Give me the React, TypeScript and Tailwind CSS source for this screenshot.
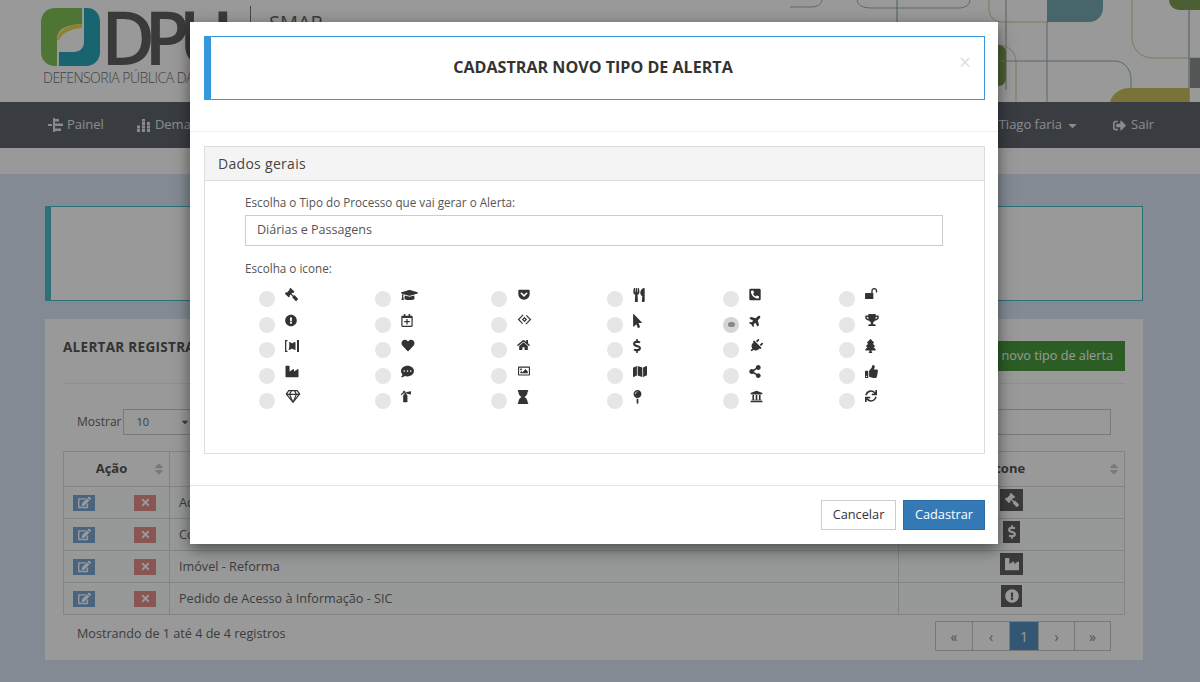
import type { ComponentType, ReactNode } from 'react'
import {
  FaGavel, FaGraduationCap, FaGetPocket, FaUtensils, FaPhoneSquareAlt,
  FaExclamationCircle, FaRegCalendarPlus, FaMousePointer, FaPlane, FaTrophy,
  FaHeart, FaHome, FaDollarSign, FaPlug, FaTree, FaIndustry, FaCommentDots, FaRegImage,
  FaMap, FaShareAlt, FaThumbsUp, FaRegGem, FaFireExtinguisher, FaHourglass, FaMapPin,
  FaUniversity, FaSync, FaEdit, FaTimes, FaSignOutAlt, FaCaretDown, FaSort,
} from 'react-icons/fa'

type IconType = ComponentType<{ className?: string }>

// ── Icons the packages do not have ───────────────────────────────────────

function DiamondCode({ className }: { className?: string }) {
  return (
    <svg viewBox="0 0 16 12" className={className} fill="none" stroke="currentColor" strokeWidth="1.3">
      <path d="M6.500 1 1.500 6l4.500 4.500M9.500 11l5-5L10 1.500" />
      <path d="M8.500 3.500 6 6l1.500 1.500M7.500 8.500 10 6 8.500 4.500" />
    </svg>
  )
}

function BracketHeart({ className }: { className?: string }) {
  return (
    <svg viewBox="0 0 14 14" className={className} fill="currentColor">
      <path d="M0 1h2.500v1.300H1.300v9.400h1.200V13H0zM14 1h-2v12h2z" />
      <path d="M4 3c1.500 0 2.500 1 3 1.500C7.500 4 9 3 10.500 3v8C9 11 8 10 7 9.500 6 10 5 11 3.500 11 4.500 9 4.500 5 4 3z" />
    </svg>
  )
}

function OpenLock({ className }: { className?: string }) {
  return (
    <svg viewBox="0 0 14 12" className={className}>
      <path d="M0 5.500h9V12H0z" fill="currentColor" />
      <path d="M7.500 5.500V3.200a2.500 2.500 0 0 1 5 0V5" fill="none" stroke="currentColor" strokeWidth="1.500" />
    </svg>
  )
}

function BlocksIcon({ className }: { className?: string }) {
  return (
    <svg viewBox="0 0 13 13" className={className} fill="currentColor">
      <path d="M0 10h3v3H0zM0 6.500h3v3H0zM5 10h3v3H5zM5 6.500h3v3H5zM5 3h3v3H5zM5 0h3v2.500H5zM10 10h3v3h-3zM10 6.500h3v3h-3zM10 3h3v3h-3z" />
    </svg>
  )
}

function PanelIcon({ className }: { className?: string }) {
  return (
    <svg viewBox="0 0 15 14" className={className} fill="currentColor">
      <path d="M0 6h4v2H0zM5 0h2v14H5zM7 1h4v2.500H7zM7 5.500h8V8H7zM7 10.500h6V13H7z" />
    </svg>
  )
}

function Gavel({ className }: { className?: string }) {
  return <FaGavel className={`-scale-x-100 ${className ?? ''}`} />
}
function Plane({ className }: { className?: string }) {
  return <FaPlane className={`-rotate-45 ${className ?? ''}`} />
}
function Plug({ className }: { className?: string }) {
  return <FaPlug className={`rotate-45 ${className ?? ''}`} />
}

function Logo() {
  return (
    <svg viewBox="0 0 60 58" className="w-[60px] h-[58px] shrink-0">
      <path d="M14 0h27v16C26 17 16 20 16 32v26h-2C6 58 0 52 0 44V14C0 6 6 0 14 0z" fill="#82c455" />
      <path d="M43 0h3c8 0 13 6 13 14v30c0 8-6 14-14 14H18V44h14c7 0 11-4 11-10z" fill="#2ba8ba" />
      <path d="M16 32c1-10 10-15 25-16v4c-12 1-20 5-23 12z" fill="#f0d850" />
    </svg>
  )
}

// ── Background page ──────────────────────────────────────────────────────

function HeaderArt() {
  return (
    <svg viewBox="0 0 500 102" className="absolute right-0 top-0 w-[500px] h-[102px]" fill="none" strokeWidth="1">
      <path d="M122 0a10 8 0 0 1-10 7H90" stroke="#9fb0b4" />
      <path d="M157 0a13 8 0 0 0 13 8h90a10 8 0 0 0 10-8" stroke="#9fb0b4" />
      <path d="M197 0v102" stroke="#7f9aa0" />
      <path d="M289 0v10a12 12 0 0 0 12 12h47" stroke="#c9cf9a" />
      <path d="M306 0v90" stroke="#8da596" />
      <path d="M347 0h56v8a14 14 0 0 1-14 14h-42z" fill="#76aab2" />
      <path d="M347 22v80" stroke="#8fb0b5" />
      <path d="M298 45h1a17 17 0 0 1 17 17v40" stroke="#c9cf9a" />
      <path d="M298 45c5 0 8 3 8 8v24c0 6-3 9-8 9z" fill="#7d9e53" />
      <path d="M298 61h117a16 18 0 0 1 16 18v23" stroke="#8fb0b5" />
      <path d="M432 0v38a20 20 0 0 0 20 20h48" stroke="#c9cf9a" />
      <path d="M469 0h31v10h-21a10 10 0 0 1-10-10z" fill="#7d9e53" />
      <path d="M489 0v102" stroke="#7f9aa0" />
      <path d="M490 58h10v30h-10z" fill="#8d918f" />
      <path d="M410 102c2-8 10-14 20-14h59v14z" fill="#cbc05c" />
    </svg>
  )
}

function Header() {
  return (
    <header className="relative h-[102px] bg-white overflow-hidden">
      <HeaderArt />
      <div className="pl-[41px] pt-2 flex items-start">
        <div className="w-[192px]">
          <div className="flex items-start h-[60px]">
            <Logo />
            <span className="w-[126px] text-[74px] leading-[54px] font-semibold tracking-[-11px] text-[#616161] mt-[2px]">DPU</span>
          </div>
          <p className="ml-[2px] text-[14px] leading-5 font-light tracking-[-0.5px] text-[#6f6f6f] whitespace-nowrap">DEFENSORIA PÚBLICA DA UNIÃO</p>
        </div>
        <div className="ml-[17px] -mt-[2px] h-[34px] border-l border-[#777] pl-[18px] text-[20px] leading-[34px] text-[#666]">SMAP</div>
      </div>
    </header>
  )
}

function NavBar() {
  return (
    <nav className="h-[46px] bg-[#60666e] flex items-center text-[13px] text-[#e6e6e6]">
      <a className="ml-[48px] flex items-center gap-[4px]"><PanelIcon className="w-[15px] h-[14px]" />Painel</a>
      <a className="ml-[33px] flex items-center gap-[5px]"><BlocksIcon className="w-[13px] h-[13px]" />Demandas</a>
      <a className="ml-auto flex items-center gap-[4px]">Tiago faria<FaCaretDown className="w-[13px] h-[13px]" /></a>
      <a className="ml-[34px] mr-[46px] flex items-center gap-[5px]"><FaSignOutAlt className="w-[13px] h-[13px]" />Sair</a>
    </nav>
  )
}

const rows: { label: string; icon: IconType; box: string }[] = [
  { label: 'Aquisição de Bens', icon: Gavel, box: 'w-[23px]' },
  { label: 'Compras', icon: FaDollarSign, box: 'w-[17px]' },
  { label: 'Imóvel - Reforma', icon: FaIndustry, box: 'w-[23px]' },
  { label: 'Pedido de Acesso à Informação - SIC', icon: FaExclamationCircle, box: 'w-[21px]' },
]

const pageButtons: { key: string; body: ReactNode; width: string }[] = [
  { key: 'first', body: '«', width: 'w-[36px] text-[#888]' },
  { key: 'prev', body: '‹', width: 'w-[37px] text-[#888]' },
  { key: '1', body: '1', width: 'w-[29px] bg-[#5590c4] text-white' },
  { key: 'next', body: '›', width: 'w-[36px] text-[#888]' },
  { key: 'last', body: '»', width: 'w-[36px] text-[#888]' },
]

function AlertTable() {
  return (
    <section className="ml-[45px] mt-[18px] w-[1098px] h-[341px] bg-white px-[18px]">
      <div className="h-[65px] flex items-start justify-between border-b border-[#eee]">
        <h2 className="mt-[18px] text-[13.500px] font-bold text-[#555] tracking-[0.3px]">ALERTAR REGISTRADOS</h2>
        <button className="mt-[22px] h-[30px] px-3 bg-[#4a9c3e] text-white text-[12.700px]">Cadastrar novo tipo de alerta</button>
      </div>
      <div className="h-[67px] pt-[9px] flex items-center justify-between pl-[14px] pr-[14px] text-[12px] text-[#666]">
        <label className="flex items-center gap-[2px]">
          Mostrar
          <span className="w-[77px] h-[26px] border border-[#c5cad4] px-3 flex items-center justify-between text-[11px]">
            10<FaCaretDown className="w-[10px] h-[10px] -mr-[3px]" />
          </span>
        </label>
        <div className="w-[300px] h-[26px] border border-[#c5cad4]" />
      </div>
      <table className="w-[1062px] table-fixed border-collapse text-[12.650px] text-[#666]">
        <colgroup>
          <col className="w-[106px]" />
          <col />
          <col className="w-[226px]" />
        </colgroup>
        <thead>
          <tr className="h-[35px] text-[13px] text-[#555]">
            <th className="border border-[#ddd] relative pr-[10px]">Ação<FaSort className="absolute right-[3px] top-[10px] w-[14px] h-[14px] text-[#ccc]" /></th>
            <th className="border border-[#ddd]">Tipo do Processo</th>
            <th className="border border-[#ddd] relative pr-[8px]">Icone<FaSort className="absolute right-[3px] top-[10px] w-[14px] h-[14px] text-[#ccc]" /></th>
          </tr>
        </thead>
        <tbody>
          {rows.map((r) => {
            const Icon = r.icon
            return (
              <tr key={r.label} className="h-[32px] bg-[#fbfffd]">
                <td className="border border-[#ddd] pl-[9px] pr-[13px]">
                  <div className="flex justify-between">
                    <span className="w-[22px] h-[16px] bg-[#7aa8d0] flex items-center justify-center text-white"><FaEdit className="w-[13px] h-[13px]" /></span>
                    <span className="w-[22px] h-[16px] bg-[#e68f8d] flex items-center justify-center text-white"><FaTimes className="w-[11px] h-[11px]" /></span>
                  </div>
                </td>
                <td className="border border-[#ddd] px-[9px]">{r.label}</td>
                <td className="border border-[#ddd]">
                  <span className={`mx-auto mb-[6px] ${r.box} h-[22px] bg-[#616161] flex items-center justify-center text-white`}><Icon className="w-[14px] h-[14px]" /></span>
                </td>
              </tr>
            )
          })}
        </tbody>
      </table>
      <div className="mt-[6px] pl-[14px] pr-[14px] flex items-start justify-between text-[12.600px] text-[#666]">
        <span className="mt-[4px]">Mostrando de 1 até 4 de 4 registros</span>
        <div className="flex h-[30px] border border-[#c8c8c8]">
          {pageButtons.map((b, i) => (
            <span key={b.key} className={`${b.width} ${i > 0 ? 'border-l border-[#c8c8c8]' : ''} flex items-center justify-center text-[14px]`}>{b.body}</span>
          ))}
        </div>
      </div>
    </section>
  )
}

// ── Modal ────────────────────────────────────────────────────────────────

const icons: { icon: IconType; size: string }[] = [
  { icon: Gavel, size: 'w-[13px] h-[13px]' },
  { icon: FaGraduationCap, size: 'w-[17px] h-[14px]' },
  { icon: FaGetPocket, size: 'w-[14px] h-[13px]' },
  { icon: FaUtensils, size: 'w-[12px] h-[14px]' },
  { icon: FaPhoneSquareAlt, size: 'w-[12px] h-[13px]' },
  { icon: OpenLock, size: 'w-[13px] h-[11px]' },
  { icon: FaExclamationCircle, size: 'w-[12px] h-[13px]' },
  { icon: FaRegCalendarPlus, size: 'w-[12px] h-[13px]' },
  { icon: DiamondCode, size: 'w-[15px] h-[11px]' },
  { icon: FaMousePointer, size: 'w-[9px] h-[14px]' },
  { icon: Plane, size: 'w-[13px] h-[13px]' },
  { icon: FaTrophy, size: 'w-[14px] h-[12px]' },
  { icon: BracketHeart, size: 'w-[14px] h-[14px]' },
  { icon: FaHeart, size: 'w-[14px] h-[13px]' },
  { icon: FaHome, size: 'w-[13px] h-[12px]' },
  { icon: FaDollarSign, size: 'w-[8px] h-[14px]' },
  { icon: Plug, size: 'w-[14px] h-[14px]' },
  { icon: FaTree, size: 'w-[11px] h-[14px]' },
  { icon: FaIndustry, size: 'w-[14px] h-[13px]' },
  { icon: FaCommentDots, size: 'w-[13px] h-[13px]' },
  { icon: FaRegImage, size: 'w-[14px] h-[12px]' },
  { icon: FaMap, size: 'w-[14px] h-[13px]' },
  { icon: FaShareAlt, size: 'w-[12px] h-[13px]' },
  { icon: FaThumbsUp, size: 'w-[13px] h-[13px]' },
  { icon: FaRegGem, size: 'w-[16px] h-[13px]' },
  { icon: FaFireExtinguisher, size: 'w-[10px] h-[13px]' },
  { icon: FaHourglass, size: 'w-[12px] h-[14px]' },
  { icon: FaMapPin, size: 'w-[9px] h-[14px]' },
  { icon: FaUniversity, size: 'w-[15px] h-[13px]' },
  { icon: FaSync, size: 'w-[12px] h-[12px]' },
]

function IconGrid() {
  return (
    <div className="mt-[11px] ml-[14px] w-[696px] grid grid-cols-6 auto-rows-[25.600px]">
      {icons.map(({ icon: Icon, size }, i) => (
        <div key={i} className="flex items-start">
          <span className={`mt-[4px] shrink-0 w-4 h-4 rounded-full flex items-center justify-center ${i === 10 ? 'bg-[#d5d5d5]' : 'bg-[#e6e6e6]'}`}>
            {i === 10 && <span className="w-[7px] h-[5px] rounded-full bg-[#888]" />}
          </span>
          <Icon className={`ml-[10px] mt-px text-[#333] ${size}`} />
        </div>
      ))}
    </div>
  )
}

function Modal() {
  return (
    <div className="ml-[190px] mt-[22px] w-[808px] h-[522px] bg-white shadow-[0_5px_15px_rgba(0,0,0,0.5)] flex flex-col">
      <div className="pl-[14px] pr-[13px] pt-[14px] pb-[31px] border-b border-[#eee]">
        <div className="relative h-[64px] border border-[#3498db] border-l-[7px] flex items-center justify-center">
          <h1 className="text-[16.100px] font-bold text-[#333] -ml-[9px] -mt-[1px]">CADASTRAR NOVO TIPO DE ALERTA</h1>
          <span className="absolute right-[13px] top-[12px] text-[21px] leading-[26px] text-[#ddd]">×</span>
        </div>
      </div>
      <div className="flex-1 pl-[14px] pr-[13px] pt-[14px]">
        <div className="h-[308px] border border-[#ddd]">
          <div className="h-[34px] bg-[#f4f4f4] border-b border-[#ddd] px-[13px] flex items-center text-[14px] text-[#444] tracking-[0.3px]">Dados gerais</div>
          <div className="pl-[40px] pt-[13px] text-[#555]">
            <label className="block text-[11.700px] leading-[16px]">Escolha o Tipo do Processo que vai gerar o Alerta:</label>
            <div className="mt-[5px] w-[698px] h-[31px] border border-[#ccc] px-[11px] flex items-center text-[12.550px]">Diárias e Passagens</div>
            <label className="block mt-[14px] text-[11.700px] leading-[16px]">Escolha o icone:</label>
            <IconGrid />
          </div>
        </div>
      </div>
      <div className="h-[59px] border-t border-[#e5e5e5] px-[13px] pt-[14px] pb-[14px] flex justify-end gap-[7px] text-[12.750px]">
        <button className="w-[75px] h-[30px] border border-[#ccc] text-[#333]">Cancelar</button>
        <button className="w-[82px] h-[30px] border border-[#2e6da4] bg-[#337ab7] text-white">Cadastrar</button>
      </div>
    </div>
  )
}

export default function App() {
  return (
    <div className="relative w-[1200px] h-[682px] overflow-hidden bg-[#dae6f5] font-['Open_Sans',sans-serif]">
      <Header />
      <NavBar />
      <div className="h-[26px] bg-white" />
      <div className="ml-[45px] mt-[32px] w-[1098px] h-[95px] bg-white border border-[#48bcc4] border-l-[6px]" />
      <AlertTable />
      <div className="absolute inset-0 bg-black/40">
        <Modal />
      </div>
    </div>
  )
}
